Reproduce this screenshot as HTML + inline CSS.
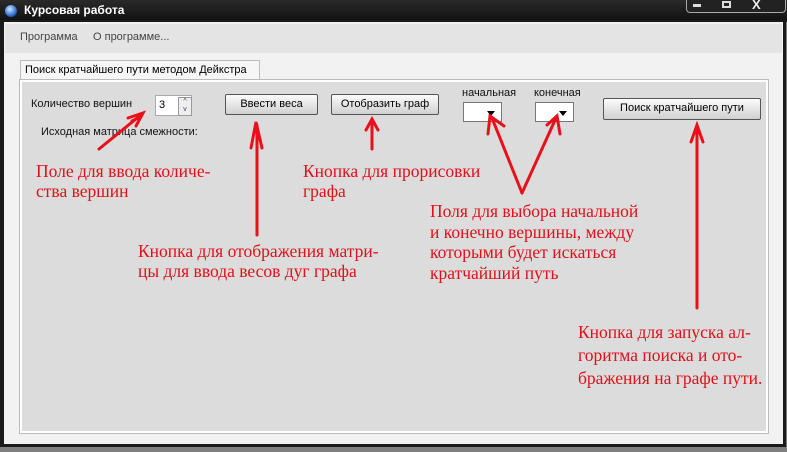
<!DOCTYPE html>
<html><head><meta charset="utf-8"><style>
body{margin:0;width:787px;height:452px;overflow:hidden;background:#7f7f7f;font-family:"Liberation Sans",sans-serif;position:relative}
.a{position:absolute}
.btn{position:absolute;background:linear-gradient(#fbfbfb,#e6e6e6 50%,#d0d0d0);border:1px solid #555;border-radius:2px;font-size:11px;text-align:center;box-sizing:border-box;line-height:19px;color:#000}
.red{position:absolute;color:#e0101a;font-family:"Liberation Serif",serif;font-size:17.5px;line-height:20px;white-space:nowrap}
.lbl{position:absolute;font-size:11px;color:#111}
.combo{position:absolute;width:39px;height:20px;background:#fff;border:1px solid #777;box-sizing:border-box}
.combo:after{content:"";position:absolute;right:6px;top:8px;border:4px solid transparent;border-top:5px solid #000}
</style></head><body>
<div class="a" style="left:0;top:0;width:787px;height:22px;background:linear-gradient(#2a2a2a,#101010)"></div>
<div class="a" style="left:5px;top:5px;width:12px;height:12px;border-radius:50%;background:radial-gradient(circle at 40% 35%,#cfe6ff,#2a6fd0 60%,#123)"></div>
<div class="a" style="left:24px;top:3px;color:#fff;font-weight:bold;font-size:12px">Курсовая работа</div>
<div class="a" style="left:686px;top:0;width:98px;height:12px;border:1px solid #aaa;border-top:none;border-radius:0 0 4px 4px;background:#222"></div>
<div class="a" style="left:693px;top:4px;width:8px;height:3px;background:#ddd"></div>
<div class="a" style="left:722px;top:1px;width:9px;height:7px;border:2px solid #ddd;box-sizing:border-box"></div>
<div class="a" style="left:752px;top:-3px;color:#eee;font-weight:bold;font-size:13px">X</div>
<div class="a" style="left:0;top:20px;width:786px;height:427px;background:#1a1a1a"></div>
<div class="a" style="left:4px;top:22px;width:779px;height:422px;background:#f2f2f2"></div>
<div class="a" style="left:5px;top:24px;width:777px;height:29px;background:#e4e4e4"></div>
<div class="a" style="left:20px;top:31px;font-size:11px;color:#444">Программа</div>
<div class="a" style="left:93px;top:31px;font-size:11px;color:#444">О программе...</div>
<div class="a" style="left:20px;top:60px;width:238px;height:21px;background:#f6f6f6;border:1px solid #bbb;border-bottom:none"></div>
<div class="a" style="left:25px;top:64px;font-size:11px">Поиск кратчайшего пути методом Дейкстра</div>
<div class="a" style="left:20px;top:80px;width:744px;height:349px;background:#dcdcdc;border:2px solid #fff;box-shadow:0 0 0 1px #bbb"></div>
<div class="lbl" style="left:31px;top:98px">Количество вершин</div>
<div class="a" style="left:155px;top:95px;width:37px;height:21px;background:#fff;border:1px solid #aaa;box-sizing:border-box;font-size:11px;padding:3px 0 0 3px">3</div>
<div class="a" style="left:178px;top:97px;width:12px;height:17px;border:1px solid #999;background:#eee;font-size:7px;line-height:8px;text-align:center;color:#446">^<br>v</div>
<div class="btn" style="left:225px;top:94px;width:93px;height:21px">Ввести веса</div>
<div class="btn" style="left:331px;top:94px;width:108px;height:21px">Отобразить граф</div>
<div class="lbl" style="left:462px;top:87px">начальная</div>
<div class="lbl" style="left:534px;top:87px">конечная</div>
<div class="combo" style="left:463px;top:102px"></div>
<div class="combo" style="left:535px;top:102px"></div>
<div class="btn" style="left:603px;top:98px;width:158px;height:22px">Поиск кратчайшего пути</div>
<div class="lbl" style="left:41px;top:126px">Исходная матрица смежности:</div>
<div class="red" style="left:36px;top:161px">Поле для ввода количе-<br>ства вершин</div>
<div class="red" style="left:303px;top:161px">Кнопка для прорисовки<br>графа</div>
<div class="red" style="left:138px;top:241px">Кнопка для отображения матри-<br>цы для ввода весов дуг графа</div>
<div class="red" style="left:430px;top:201px;line-height:20.5px">Поля для выбора начальной<br>и конечно вершины, между<br>которыми будет искаться<br>кратчайший путь</div>
<div class="red" style="left:578px;top:321px;line-height:23px">Кнопка для запуска ал-<br>горитма поиска и ото-<br>бражения на графе пути.</div>
<svg class="a" style="left:0;top:0" width="787" height="452" fill="none" stroke="#e8101a" stroke-width="3" stroke-linecap="round">
<path d="M99 149 L142 114 M128 118 L143 113 L136 126 M132 121 L140 117"/>
<path d="M257 235 L257 125 M251 148 L256 122 L262 148"/>
<path d="M372 149 L372 121 M366 130 L372 119 L378 130"/>
<path d="M522 193 L492 118 M488 134 L490 116 L504 126"/>
<path d="M522 193 L556 118 M547 125 L557 116 L560 134"/>
<path d="M697 308 L697 127 M691 142 L697 125 L703 142"/>
</svg>
</body></html>
